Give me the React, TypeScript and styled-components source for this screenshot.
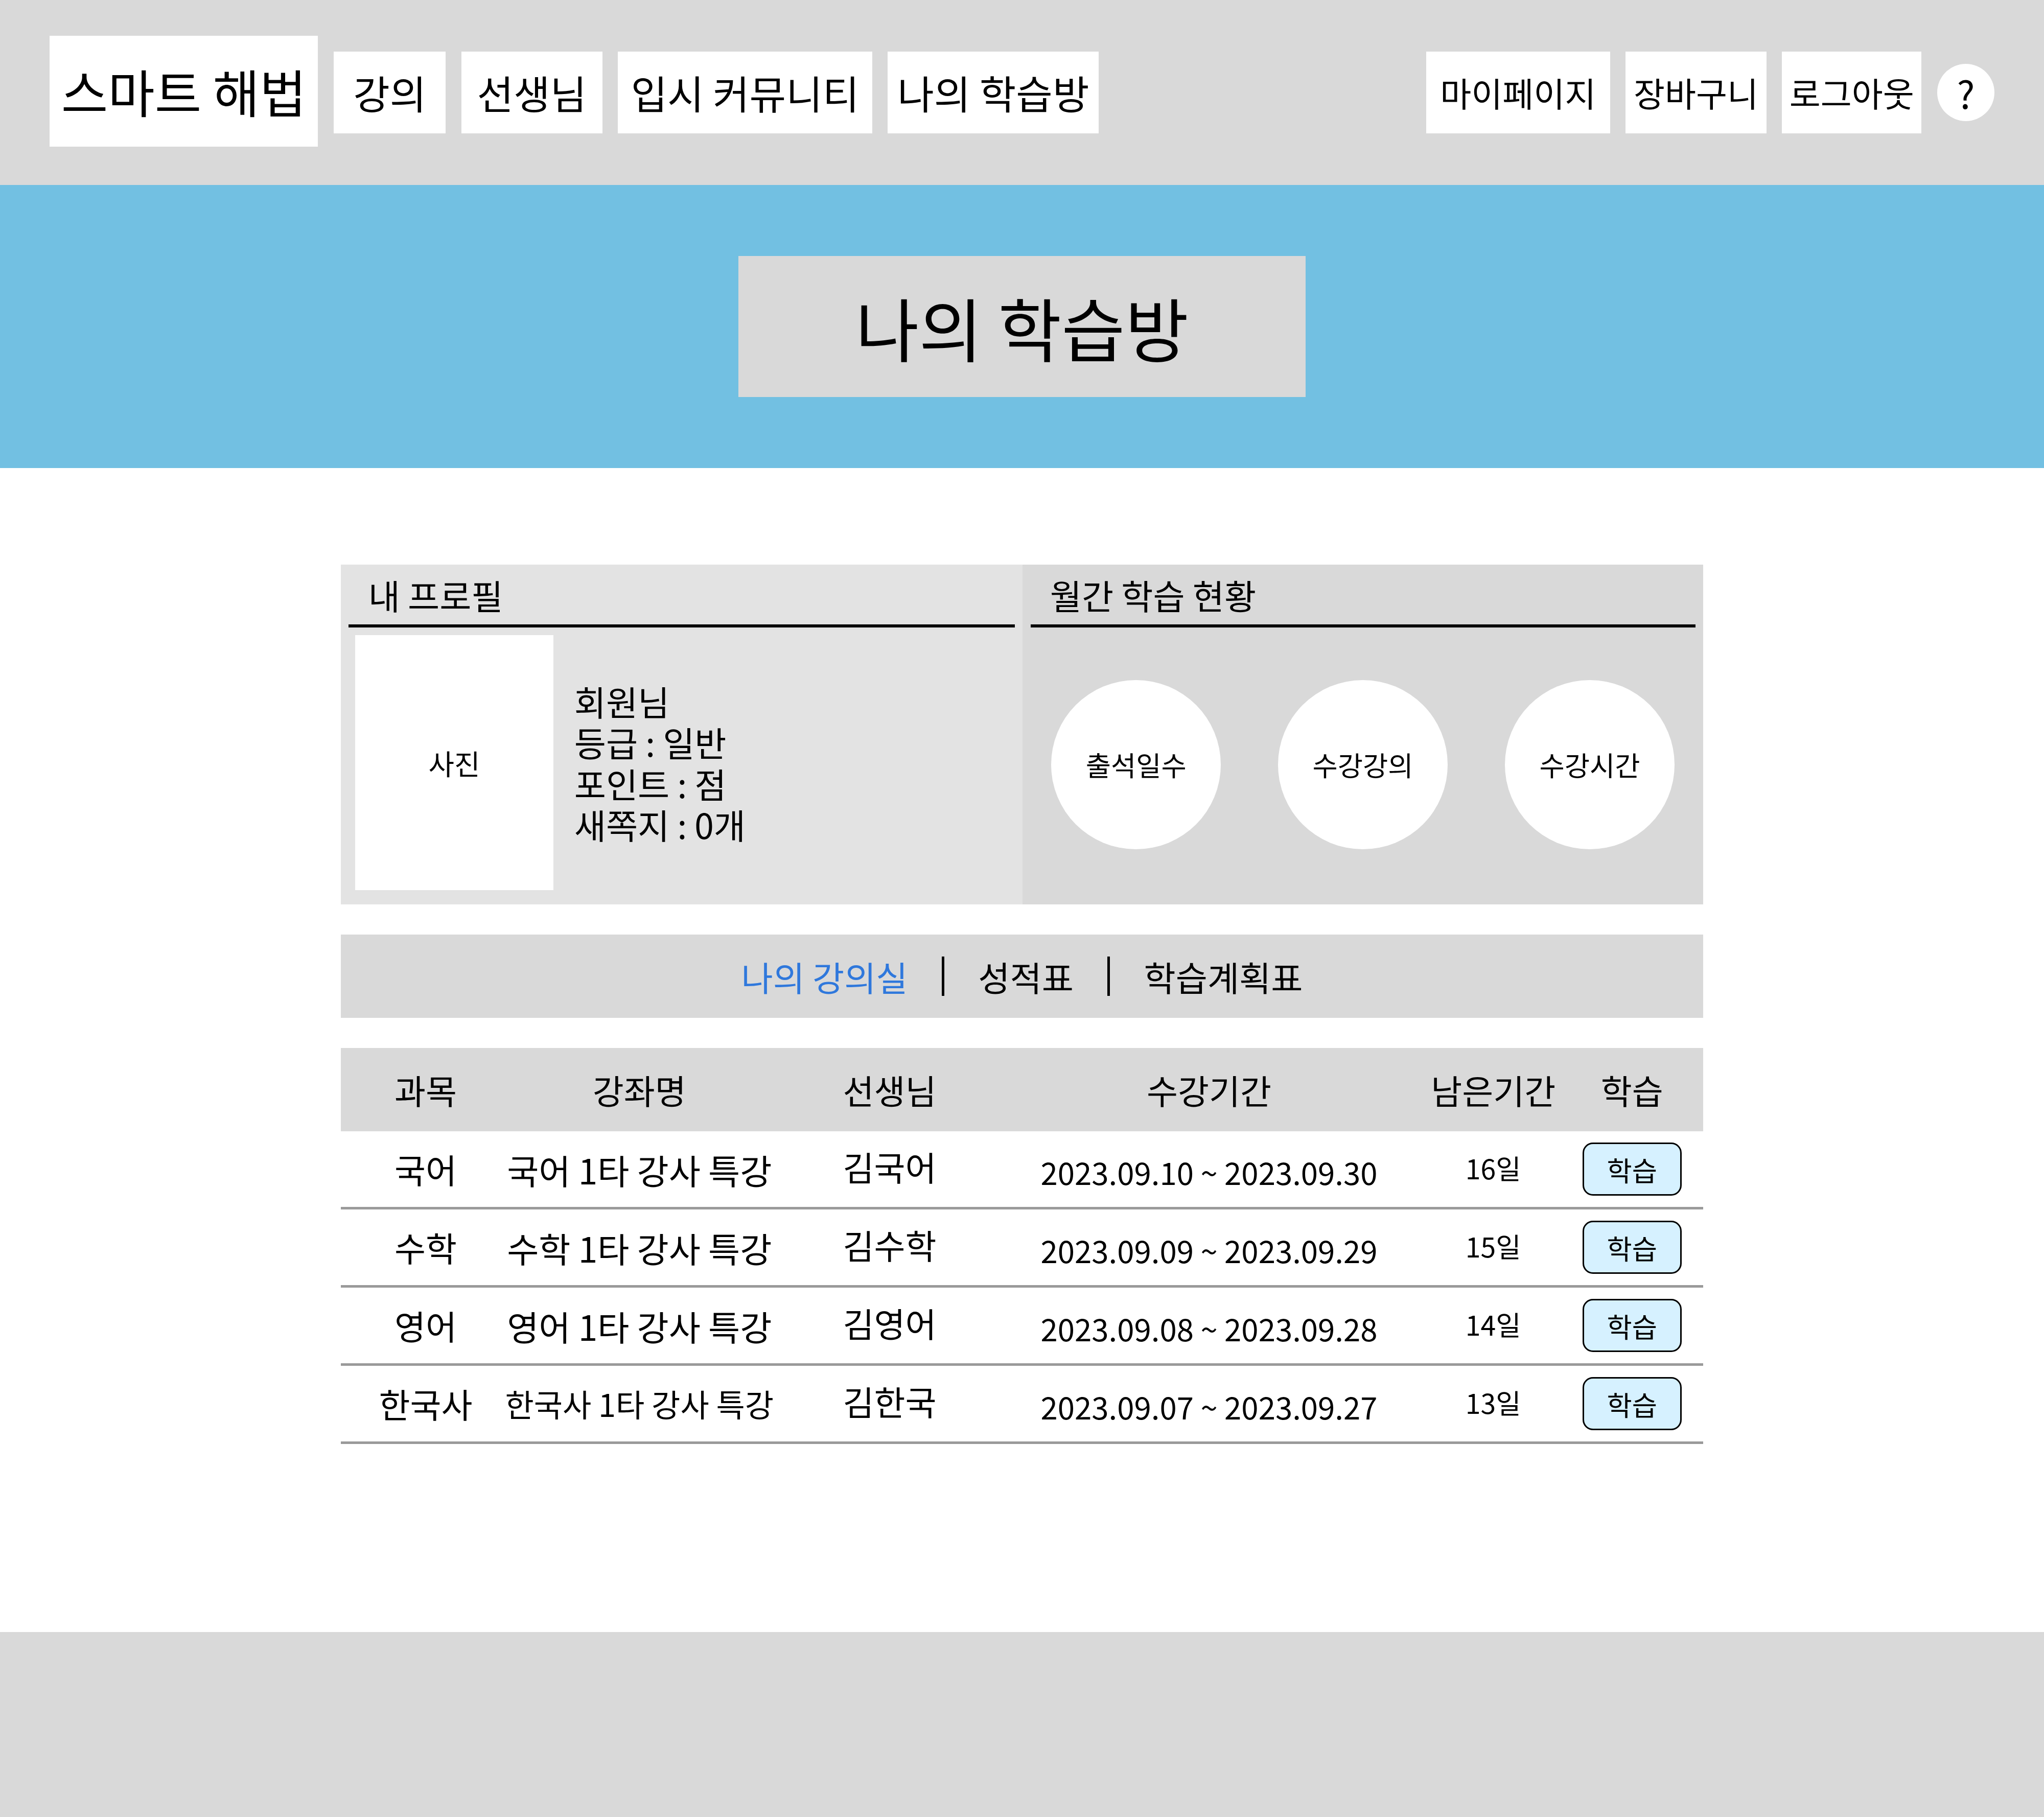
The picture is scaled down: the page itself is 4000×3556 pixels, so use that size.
import React from 'react';
import styled, { createGlobalStyle } from 'styled-components';

// design is measured at 1568px wide, then scaled up to the 4000px window
const SCALE = 4000 / 1568;

const GlobalStyle = createGlobalStyle`
  html, body {
    margin: 0;
    padding: 0;
    background: #ffffff;
  }
  body {
    font-family: "Noto Sans CJK KR", "Noto Sans", sans-serif;
    color: #000;
  }
`;

const Page = styled.div`
  width: 1568px;
  zoom: ${SCALE};
  display: flex;
  flex-direction: column;
  line-height: 1.2;
`;

const Header = styled.header`
  height: 142px;
  background-color: #d9d9d9;
  display: flex;
  align-items: center;
  justify-content: space-between;
  padding: 0 38px;
  box-sizing: border-box;
`;

const NavGroup = styled.nav`
  display: flex;
  align-items: center;
  gap: 12px;
`;

const Logo = styled.div`
  width: 206px;
  height: 85px;
  background: #fff;
  display: flex;
  align-items: center;
  justify-content: center;
  font-size: 39px;
  margin-top: -2px;
`;

const NavItem = styled.div<{ $w: number; $size?: number }>`
  width: ${({ $w }) => $w}px;
  height: 63px;
  background: #fff;
  display: flex;
  align-items: center;
  justify-content: center;
  font-size: ${({ $size }) => $size ?? 30.5}px;
  white-space: nowrap;
`;

const HelpButton = styled.div`
  width: 44px;
  height: 44px;
  border-radius: 50%;
  background: #fff;
  display: flex;
  align-items: center;
  justify-content: center;
  font-size: 29px;
`;

const Banner = styled.section`
  height: 217px;
  background-color: #72c0e2;
  display: flex;
  align-items: center;
  justify-content: center;
`;

const BannerTitle = styled.h1`
  margin: 0;
  width: 435px;
  height: 108px;
  background: #d9d9d9;
  display: flex;
  align-items: center;
  justify-content: center;
  font-size: 53px;
  font-weight: 400;
`;

const Main = styled.main`
  height: 893px;
  box-sizing: border-box;
  padding-top: 74px;
  display: flex;
  flex-direction: column;
  align-items: center;
`;

const Content = styled.div`
  width: 1045px;
  display: flex;
  flex-direction: column;
  gap: 23px;
`;

const ProfileGrid = styled.div`
  display: grid;
  grid-template-columns: 523px 522px;
  height: 261px;
`;

const Panel = styled.div<{ $bg: string }>`
  background: ${({ $bg }) => $bg};
  display: flex;
  flex-direction: column;
`;

const PanelTitle = styled.div`
  margin: 0 6px;
  height: 46px;
  border-bottom: 2.5px solid #000;
  padding-left: 15px;
  display: flex;
  align-items: center;
  font-size: 26.5px;
`;

const ProfileBody = styled.div`
  flex: 1;
  display: flex;
  align-items: center;
  padding: 6px 11px 11px;
  gap: 16px;
`;

const Photo = styled.div`
  width: 152px;
  height: 100%;
  background: #fff;
  display: flex;
  align-items: center;
  justify-content: center;
  font-size: 21.5px;
`;

const InfoList = styled.div`
  display: flex;
  flex-direction: column;
  font-size: 26.5px;
  line-height: 31.5px;
`;

const StatRow = styled.div`
  flex: 1;
  display: flex;
  align-items: center;
  justify-content: center;
  gap: 44px;
  padding-bottom: 2px;
`;

const StatCircle = styled.div`
  width: 130px;
  height: 130px;
  border-radius: 50%;
  background: #fff;
  display: flex;
  align-items: center;
  justify-content: center;
  font-size: 21px;
`;

const TabBar = styled.div`
  height: 64px;
  background: #d9d9d9;
  display: flex;
  align-items: center;
  justify-content: center;
  font-size: 26.5px;
`;

const Tab = styled.span<{ $active?: boolean }>`
  color: ${({ $active }) => ($active ? '#2f78dc' : '#000')};
`;

const TabDivider = styled.span`
  width: 2px;
  height: 30px;
  background: #000;
  margin: 0 26px;
`;

const Table = styled.div`
  display: flex;
  flex-direction: column;
`;

const COLUMNS = '130px 198px 186px 304px 132px 95px';

const HeadRow = styled.div`
  display: grid;
  grid-template-columns: ${COLUMNS};
  height: 64px;
  background: #d9d9d9;
  align-items: center;
  font-size: 26px;
`;

const BodyRow = styled.div`
  display: grid;
  grid-template-columns: ${COLUMNS};
  height: 58px;
  border-bottom: 2px solid #9a9a9a;
  align-items: center;
`;

const Cell = styled.div<{ $size?: number; $shift?: number; $pr?: number }>`
  text-align: center;
  white-space: nowrap;
  font-size: ${({ $size }) => $size ?? 26}px;
  padding-right: ${({ $pr }) => $pr ?? 0}px;
  transform: translateY(${({ $shift }) => $shift ?? 0}px);
  display: flex;
  justify-content: center;
`;

const StudyButton = styled.button`
  width: 76px;
  height: 41px;
  box-sizing: border-box;
  border: 1.5px solid #000;
  border-radius: 8px;
  background: #d6f1ff;
  font-family: inherit;
  font-size: 21px;
  color: #000;
  padding: 0;
  cursor: pointer;
`;

const Footer = styled.footer`
  height: 142px;
  background: #d9d9d9;
`;

const leftNav = [
  { label: '강의', w: 86 },
  { label: '선생님', w: 108 },
  { label: '입시 커뮤니티', w: 195 },
  { label: '나의 학습방', w: 162 },
];

const rightNav = [
  { label: '마이페이지', w: 141 },
  { label: '장바구니', w: 108 },
  { label: '로그아웃', w: 107 },
];

const courses = [
  { subject: '국어', title: '국어 1타 강사 특강', teacher: '김국어', period: '2023.09.10 ~ 2023.09.30', left: 16 },
  { subject: '수학', title: '수학 1타 강사 특강', teacher: '김수학', period: '2023.09.09 ~ 2023.09.29', left: 15 },
  { subject: '영어', title: '영어 1타 강사 특강', teacher: '김영어', period: '2023.09.08 ~ 2023.09.28', left: 14 },
  { subject: '한국사', title: '한국사 1타 강사 특강', teacher: '김한국', period: '2023.09.07 ~ 2023.09.27', left: 13 },
];

const App: React.FC = () => {
  return (
    <>
      <GlobalStyle />
      <Page>
        <Header>
          <NavGroup>
            <Logo>스마트 해법</Logo>
            {leftNav.map(item => (
              <NavItem key={item.label} $w={item.w}>{item.label}</NavItem>
            ))}
          </NavGroup>
          <NavGroup>
            {rightNav.map(item => (
              <NavItem key={item.label} $w={item.w} $size={26}>{item.label}</NavItem>
            ))}
            <HelpButton>?</HelpButton>
          </NavGroup>
        </Header>

        <Banner>
          <BannerTitle>나의 학습방</BannerTitle>
        </Banner>

        <Main>
          <Content>
            <ProfileGrid>
              <Panel $bg="#e3e3e3">
                <PanelTitle>내 프로필</PanelTitle>
                <ProfileBody>
                  <Photo>사진</Photo>
                  <InfoList>
                    <span>회원님</span>
                    <span>등급 : 일반</span>
                    <span>포인트 : 점</span>
                    <span>새쪽지 : 0개</span>
                  </InfoList>
                </ProfileBody>
              </Panel>
              <Panel $bg="#d9d9d9">
                <PanelTitle>월간 학습 현황</PanelTitle>
                <StatRow>
                  <StatCircle>출석일수</StatCircle>
                  <StatCircle>수강강의</StatCircle>
                  <StatCircle>수강시간</StatCircle>
                </StatRow>
              </Panel>
            </ProfileGrid>

            <TabBar>
              <Tab $active>나의 강의실</Tab>
              <TabDivider />
              <Tab>성적표</Tab>
              <TabDivider />
              <Tab>학습계획표</Tab>
            </TabBar>

            <Table>
              <HeadRow>
                <Cell>과목</Cell>
                <Cell>강좌명</Cell>
                <Cell>선생님</Cell>
                <Cell>수강기간</Cell>
                <Cell>남은기간</Cell>
                <Cell $pr={14}>학습</Cell>
              </HeadRow>
              {courses.map(c => (
                <BodyRow key={c.subject}>
                  <Cell>{c.subject}</Cell>
                  <Cell $size={c.subject.length > 2 ? 24 : 26.5}>{c.title}</Cell>
                  <Cell $shift={-2}>{c.teacher}</Cell>
                  <Cell $size={23.5} $shift={2}>{c.period}</Cell>
                  <Cell $size={21} $shift={-1}>{c.left}일</Cell>
                  <Cell $pr={14}>
                    <StudyButton>학습</StudyButton>
                  </Cell>
                </BodyRow>
              ))}
            </Table>
          </Content>
        </Main>

        <Footer />
      </Page>
    </>
  );
};

export default App;
